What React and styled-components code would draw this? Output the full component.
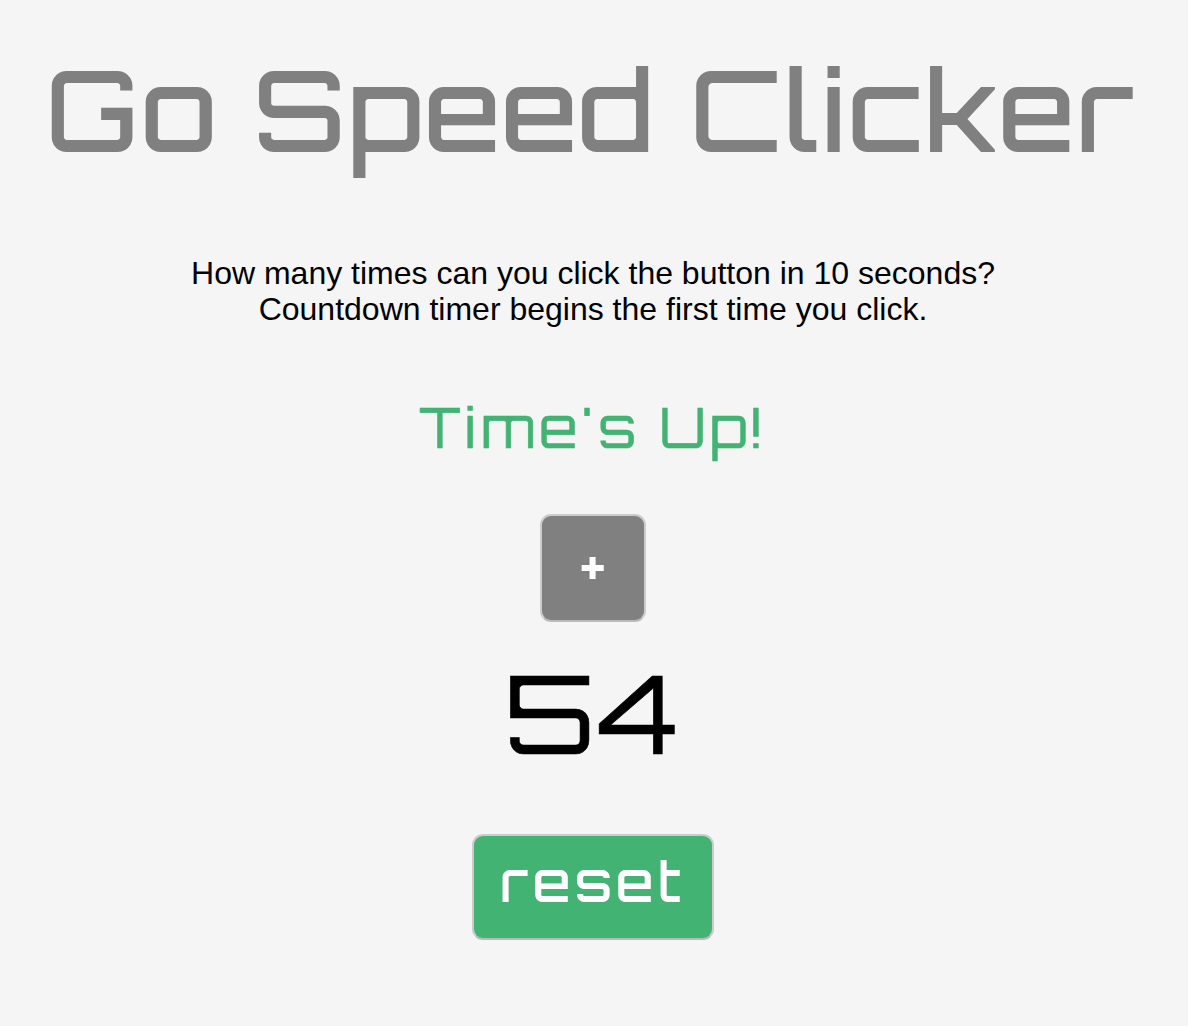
import React, { useState } from "react";
import styled, { createGlobalStyle } from "styled-components";

const GlobalStyle = createGlobalStyle`
  * { box-sizing: border-box; }
  body {
    margin: 0;
    background: #f5f5f5;
    color: #000;
    font-family: "Liberation Sans", Arial, sans-serif;
  }
`;

const display = `"Orbitron", "DejaVu Sans", sans-serif`;

const Page = styled.main`
  display: flex;
  flex-direction: column;
  align-items: center;
  min-height: 1026px;
  padding: 44px 2px 0 0;
`;

const Line = styled.div`
  font-family: ${display};
  font-size: ${(p) => p.$size}px;
  line-height: ${(p) => p.$line}px;
  font-weight: ${(p) => p.$weight || 400};
  letter-spacing: ${(p) => p.$track || 0}px;
  color: ${(p) => p.$color};
  white-space: nowrap;
  -webkit-text-stroke: ${(p) => p.$stroke || 0}px currentColor;
`;

const Title = styled(Line).attrs({ as: "h1" })`
  margin: 0;
  padding-right: 5px;
`;

const Intro = styled.p`
  margin: 81px 0 70px;
  font-size: 32px;
  line-height: 36px;
  text-align: center;
`;

const Button = styled.button`
  display: flex;
  align-items: center;
  justify-content: center;
  padding: 0;
  border: 2px solid #ccc;
  border-bottom-color: #bbb;
  border-radius: 11px;
  color: #fff;
  font-family: ${display};
`;

const AddButton = styled(Button)`
  width: 106px;
  height: 108px;
  margin: 57px 0 31px;
  padding-bottom: 11px;
  background: #808080;
  font-size: 55px;
  font-weight: 500;
  line-height: 60px;
`;

const ResetButton = styled(Button)`
  width: 242px;
  height: 106px;
  margin-top: 61px;
  padding: 0 1px 12px 0;
  background: #43b373;
`;

export default function App() {
  const [count, setCount] = useState(54);
  return (
    <Page>
      <GlobalStyle />
      <Title $size={112} $line={130} $weight={500} $track={1.65} $color="#808080">Go Speed Clicker</Title>
      <Intro>
        How many times can you click the button in 10 seconds?
        <br />
        Countdown timer begins the first time you click.
      </Intro>
      <Line $size={55} $line={60} $stroke={0.7} $track={4.4} $color="#43b373">Time's Up!</Line>
      <AddButton>+</AddButton>
      <Line $size={108} $line={120} $stroke={0.6} $track={4.4} $color="#000">{count}</Line>
      <ResetButton onClick={() => setCount(0)}>
        <Line $size={55} $line={64} $weight={500} $track={4.2} $color="#fff">reset</Line>
      </ResetButton>
    </Page>
  );
}
